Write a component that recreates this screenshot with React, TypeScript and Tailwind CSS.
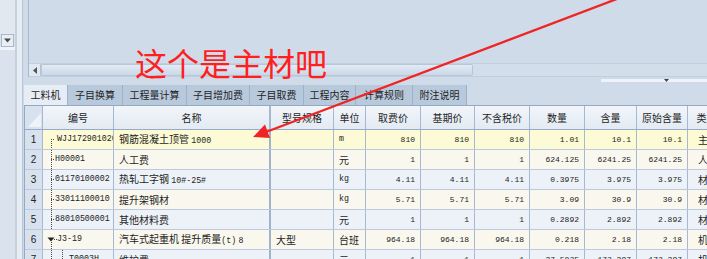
import React from 'react';

type Row = {
  no: number;
  tree: 'first' | 'mid' | 'parent' | 'child';
  code: string;
  name: string;
  spec: string;
  unit: string;
  p1: string;
  p2: string;
  p3: string;
  qty: string;
  cont: string;
  orig: string;
  type: string;
};

const rows: Row[] = [
  { no: 1, tree: 'first', code: 'WJJ172901020', name: '钢筋混凝土顶管 1000', spec: '', unit: 'm', p1: '810', p2: '810', p3: '810', qty: '1.01', cont: '10.1', orig: '10.1', type: '主材' },
  { no: 2, tree: 'mid', code: 'H00001', name: '人工费', spec: '', unit: '元', p1: '1', p2: '1', p3: '1', qty: '624.125', cont: '6241.25', orig: '6241.25', type: '人工' },
  { no: 3, tree: 'mid', code: '01170100002', name: '热轧工字钢 10#-25#', spec: '', unit: 'kg', p1: '4.11', p2: '4.11', p3: '4.11', qty: '0.3975', cont: '3.975', orig: '3.975', type: '材料' },
  { no: 4, tree: 'mid', code: '33011100010', name: '提升架钢材', spec: '', unit: 'kg', p1: '5.71', p2: '5.71', p3: '5.71', qty: '3.09', cont: '30.9', orig: '30.9', type: '材料' },
  { no: 5, tree: 'mid', code: '88010500001', name: '其他材料费', spec: '', unit: '元', p1: '1', p2: '1', p3: '1', qty: '0.2892', cont: '2.892', orig: '2.892', type: '材料' },
  { no: 6, tree: 'parent', code: 'J3-19', name: '汽车式起重机 提升质量(t) 8', spec: '大型', unit: '台班', p1: '964.18', p2: '964.18', p3: '964.18', qty: '0.218', cont: '2.18', orig: '2.18', type: '机械' },
  { no: 7, tree: 'child', code: 'T0003H', name: '维护费', spec: '', unit: '元', p1: '1', p2: '1', p3: '1', qty: '37.5825', cont: '172.397', orig: '172.397', type: '机械' },
];

const tabs = [
  { label: '工料机', w: 'w-[44px]', active: true },
  { label: '子目换算', w: 'w-[55px]' },
  { label: '工程量计算', w: 'w-[64px]' },
  { label: '子目增加费', w: 'w-[63px]' },
  { label: '子目取费', w: 'w-[54px]' },
  { label: '工程内容', w: 'w-[52px]' },
  { label: '计算规则', w: 'w-[57px]' },
  { label: '附注说明', w: 'w-[54px]' },
];

const cjk = "font-['Noto_Sans_CJK_SC','Noto_Sans',sans-serif]";
const mono = "font-['Liberation_Mono',monospace]";

function TreeMark({ kind }: { kind: Row['tree'] }) {
  const dot = { stroke: '#4b4b4b', strokeWidth: 1, strokeDasharray: '1 1' };
  if (kind === 'parent') {
    return (
      <svg width="14" height="19" className="shrink-0">
        <path d="M4.5 7.5 L11.5 7.5 L8 11.5 Z" fill="#222" />
        <line x1="8.5" y1="12" x2="8.5" y2="19" {...dot} />
        <line x1="11" y1="9.5" x2="14" y2="9.5" {...dot} />
      </svg>
    );
  }
  if (kind === 'child') {
    return (
      <svg width="26" height="19" className="shrink-0">
        <line x1="8.5" y1="0" x2="8.5" y2="19" {...dot} />
        <line x1="19.5" y1="0" x2="19.5" y2="9" {...dot} />
        <line x1="19" y1="9.5" x2="25" y2="9.5" {...dot} />
      </svg>
    );
  }
  return (
    <svg width={kind === 'first' ? 14 : 12} height="19" className="shrink-0">
      <line x1="8.5" y1={kind === 'first' ? 9 : 0} x2="8.5" y2="19" {...dot} />
      <line x1="8" y1="9.5" x2="12" y2="9.5" {...dot} />
    </svg>
  );
}

function rowBg(r: Row) {
  if (r.no === 1) return 'bg-[#fdfbd6]';
  return r.no % 2 === 0 ? 'bg-[#faf8ee]' : 'bg-[#edf2f9]';
}

// latin runs inside chinese names use the narrow mono face
function MixedText({ text }: { text: string }) {
  return (
    <span>
      {text.split(/([0-9#\-()t]+)/).map((p, i) =>
        /^[0-9#\-()t]+$/.test(p) ? (
          <span key={i} className={`${mono} text-[8.3px]`}>{p}</span>
        ) : (
          <span key={i}>{p}</span>
        )
      )}
    </span>
  );
}

const numCell = `shrink-0 flex items-center justify-end border-r border-[#a6b9d0] pr-[5px] text-[8px] text-[#222] ${mono}`;

export default function App() {
  return (
    <div className="relative w-[707px] h-[259px] overflow-hidden bg-[#d0dbe9] flex">
      {/* left strip */}
      <div className="flex shrink-0 h-full">
        <div className="w-[15px] h-full bg-[#dae3ed] flex flex-col">
          <div className="h-[34px] shrink-0 bg-[#e1e8f0]" />
          <div className="h-[13px] shrink-0 mx-[1px] border border-[#a9b8ca] bg-[#e9eef5] flex items-center justify-center">
            <svg width="7" height="5">
              <path d="M0 0.5 H7 L3.5 4.5 Z" fill="#4a4a4a" />
            </svg>
          </div>
          <div className="h-[3px] shrink-0 bg-[#f0f4f8]" />
        </div>
        <div className="w-[2px] bg-[#c5d0dc]" />
        <div className="w-[5px] bg-[#e6ecf3]" />
        <div className="w-[1px] bg-[#b6c4d4]" />
      </div>

      {/* main */}
      <div className="flex-1 flex flex-col min-w-0">
        {/* upper panel */}
        <div className="h-[77px] shrink-0 ml-[5px] border-l border-[#a8b8cc] flex flex-col justify-end">
          <div className="h-[14px] flex border-t border-[#c2cfdf] border-b border-[#9aacc3] bg-[#d3deeb]">
            <div className="w-[12px] bg-[#e0e8f1] border-r border-[#b3c2d5] flex items-center justify-center">
              <svg width="4" height="7">
                <path d="M4 0 V7 L0 3.5 Z" fill="#555" />
              </svg>
            </div>
            <div className="w-[432px] rounded-[2px] border border-[#b7c7da] bg-linear-to-b from-[#e2eaf4] to-[#cbd8e8]" />
          </div>
        </div>

        {/* gap with small bar */}
        <div className="h-[8px] shrink-0 flex justify-end items-start">
          <div className="mt-[2px] h-[3px] w-[106px] bg-[#eef3f9] flex items-center pl-[63px]">
            <svg width="5" height="3">
              <path d="M0 0 H5 L2.5 3 Z" fill="#444" />
            </svg>
          </div>
        </div>

        {/* tabs */}
        <div className="h-[20px] shrink-0 ml-[1px] flex">
          {tabs.map((t) => (
            <div
              key={t.label}
              className={`${t.w} h-full shrink-0 flex items-center justify-center border-r border-[#9db1c9] text-[10px] leading-none text-[#1e1e1e] whitespace-nowrap ${cjk} ${
                t.active ? 'bg-[#e7edf4]' : 'bg-[#b8c9dc]'
              }`}
            >
              {t.label}
            </div>
          ))}
        </div>

        {/* table */}
        <div className="ml-[1px] shrink-0 flex flex-col border-t border-l border-[#93a9c4] bg-white">
          {/* header */}
          <div className="flex h-[24px] shrink-0 border-b border-[#95abc6] bg-linear-to-b from-[#f2f6fa] to-[#e3eaf3] text-[10px] leading-none text-[#1e1e1e]">
            <div className="w-[18px] shrink-0 border-r border-[#a6b9d0] bg-[#d8e2ee] flex items-end justify-end">
              <svg width="15" height="17">
                <path d="M14 1 V15 H1 Z" fill="#eef3f8" />
              </svg>
            </div>
            {[
              ['编号', 'w-[71px] border-r'],
              ['名称', 'w-[157px] border-r-2'],
              ['型号规格', 'w-[63px] border-r'],
              ['单位', 'w-[32px] border-r'],
              ['取费价', 'w-[55px] border-r'],
              ['基期价', 'w-[54px] border-r'],
              ['不含税价', 'w-[55px] border-r'],
              ['数量', 'w-[55px] border-r'],
              ['含量', 'w-[52px] border-r'],
              ['原始含量', 'w-[51px] border-r'],
              ['类别', 'w-[38px] border-r'],
            ].map(([l, w]) => (
              <div
                key={l}
                className={`${w} shrink-0 border-[#a6b9d0] flex items-center justify-center whitespace-nowrap ${cjk}`}
              >
                {l}
              </div>
            ))}
          </div>

          {rows.map((r) => (
            <div key={r.no} className={`flex h-[20px] shrink-0 border-b border-[#bccadb] items-stretch leading-none ${rowBg(r)}`}>
              <div className="w-[18px] shrink-0 border-r border-[#a6b9d0] bg-[#d8e2ee] flex items-center justify-center text-[10px] text-[#222] font-['Liberation_Sans',sans-serif]">
                {r.no}
              </div>
              <div className="w-[71px] shrink-0 border-r border-[#a6b9d0] flex items-center overflow-hidden whitespace-nowrap">
                <TreeMark kind={r.tree} />
                <span className={`text-[8.3px] text-[#222] ${mono}`}>{r.code}</span>
              </div>
              <div className={`w-[157px] shrink-0 border-r-2 border-[#9fb3cb] flex items-center pl-[5px] whitespace-pre overflow-hidden text-[10px] text-[#1e1e1e] ${cjk}`}>
                <MixedText text={r.name} />
              </div>
              <div className={`w-[63px] shrink-0 border-r border-[#a6b9d0] flex items-center pl-[5px] text-[10px] text-[#1e1e1e] ${cjk}`}>
                {r.spec}
              </div>
              <div
                className={`w-[32px] shrink-0 border-r border-[#a6b9d0] flex items-center pl-[5px] text-[#1e1e1e] ${
                  /^[a-z]+$/.test(r.unit) ? `${mono} text-[8.3px]` : `${cjk} text-[10px]`
                }`}
              >
                {r.unit}
              </div>
              <div className={`w-[55px] ${numCell}`}>{r.p1}</div>
              <div className={`w-[54px] ${numCell}`}>{r.p2}</div>
              <div className={`w-[55px] ${numCell}`}>{r.p3}</div>
              <div className={`w-[55px] ${numCell}`}>{r.qty}</div>
              <div className={`w-[52px] ${numCell}`}>{r.cont}</div>
              <div className={`w-[51px] ${numCell}`}>{r.orig}</div>
              <div className={`w-[38px] shrink-0 border-r border-[#a6b9d0] flex items-center pl-[10px] text-[10px] text-[#1e1e1e] whitespace-nowrap ${cjk}`}>
                {r.type}
              </div>
            </div>
          ))}
        </div>
      </div>

      {/* annotation */}
      <div className={`absolute left-[135px] top-[46px] text-[32px] leading-none text-[#ff1f1f] whitespace-nowrap ${cjk}`}>
        这个是主材吧
      </div>
      <svg className="absolute left-0 top-0" width="707" height="259">
        <line x1="617" y1="-1" x2="266" y2="132" stroke="#f02424" strokeWidth="2.4" />
        <path d="M253 137 L265 124.5 L270 138 Z" fill="#f02424" />
      </svg>
    </div>
  );
}
